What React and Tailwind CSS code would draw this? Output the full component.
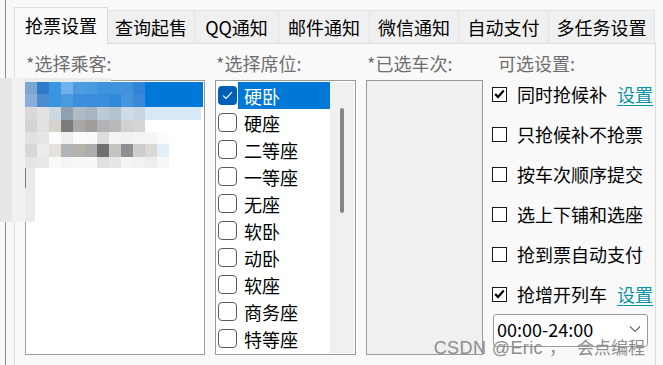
import React from 'react';

const TABS = [
  { label: '抢票设置', w: 'w-[94px]', active: true },
  { label: '查询起售', w: 'w-[87px]' },
  { label: 'QQ通知', w: 'w-[84px]' },
  { label: '邮件通知', w: 'w-[91px]' },
  { label: '微信通知', w: 'w-[89px]' },
  { label: '自动支付', w: 'w-[90px]' },
  { label: '多任务设置', w: 'w-[106px]' },
];

const SEATS = ['硬卧', '硬座', '二等座', '一等座', '无座', '软卧', '动卧', '软座', '商务座', '特等座'];

const OPTIONS = [
  { label: '同时抢候补', checked: true, link: true },
  { label: '只抢候补不抢票' },
  { label: '按车次顺序提交' },
  { label: '选上下铺和选座' },
  { label: '抢到票自动支付' },
  { label: '抢增开列车', checked: true, link: true },
];

// privacy mosaic over the passenger list
const MOSAIC = [
  { h: 'h-[12px]', cells: ['bg-[#7ba7d1]', 'bg-[#2f7bc7]', 'bg-[#3996e0]', 'bg-[#72b1e9]', 'bg-[#4b9ce1]', 'bg-[#4a9ae0]', 'bg-[#3e93de]', 'bg-[#3f92de]', 'bg-[#4291dc]', 'bg-[#2f86d8]'] },
  { h: 'h-[13px]', cells: ['bg-[#8aaed5]', 'bg-[#4a8dd0]', 'bg-[#3a95e0]', 'bg-[#4a9ae0]', 'bg-[#3b8fdc]', 'bg-[#3a8edc]', 'bg-[#3a8cdc]', 'bg-[#3089d9]', 'bg-[#4595dd]', 'bg-[#3a89d9]'] },
  { h: 'h-[13px]', cells: ['bg-[#d9d9d9]', 'bg-[#e2e2e2]', 'bg-[#ced8e1]', 'bg-[#8fa1b1]', 'bg-[#aebac6]', 'bg-[#a7b5c2]', 'bg-[#bccad6]', 'bg-[#b3c3d0]', 'bg-[#cfdce8]', 'bg-[#c9d6e2]'], tail: true },
  { h: 'h-[12px]', cells: ['bg-[#d3d3d3]', 'bg-[#e1e1e1]', 'bg-[#d9d3cd]', 'bg-[#7c7c7c]', 'bg-[#a8a8a8]', 'bg-[#a19d99]', 'bg-[#b1b3b7]', 'bg-[#b9b9b9]', 'bg-[#d1d1d1]', 'bg-[#d5d5d5]'] },
  { h: 'h-[12px]', cells: ['bg-[#e1e1e1]', 'bg-[#e5e5e5]', 'bg-[#fcfcfc]', 'bg-[#efefef]', 'bg-[#fbfbfb]', 'bg-[#fafafa]', 'bg-[#dddddd]', 'bg-[#f4f4f4]', 'bg-[#f1f1f1]', 'bg-[#f4f4f4]', 'bg-[#f4f6f8]', 'bg-[#fbfbfb]'] },
  { h: 'h-[13px]', cells: ['bg-[#d7d7d7]', 'bg-[#ececec]', 'bg-[#e5e1dd]', 'bg-[#b1b3b7]', 'bg-[#b5b1ad]', 'bg-[#adadad]', 'bg-[#717171]', 'bg-[#c5c5c1]', 'bg-[#8d8f91]', 'bg-[#cdcdcd]', 'bg-[#d9d9d5]', 'bg-[#e5eff7]'] },
  { h: 'h-[11px]', cells: ['bg-[#e5e5e5]', 'bg-[#e9e9e9]', 'bg-[#fafafa]', 'bg-[#f4f4f4]', 'bg-[#f8f8f8]', 'bg-[#f8f8f8]', 'bg-[#e1e1e1]', 'bg-[#e5e7e9]', 'bg-[#f4f4f4]', 'bg-[#f2f2f2]', 'bg-[#eeeeee]', 'bg-[#f6f8fa]'] },
];

function SeatCheck({ checked }) {
  if (checked) {
    return (
      <span className="w-[19px] h-[19px] rounded-[4px] bg-[#005fb8] flex items-center justify-center shrink-0">
        <svg width="11" height="9" viewBox="0 0 11 9" fill="none">
          <path d="M1 4.6 L4 7.4 L10 1.2" stroke="#fff" strokeWidth="1.1" />
        </svg>
      </span>
    );
  }
  return <span className="w-[19px] h-[19px] rounded-[4px] border-[1.5px] border-[#5c5c5c] bg-white shrink-0" />;
}

function OptCheck({ checked }) {
  return (
    <span className="w-[15px] h-[15px] border-[1.5px] border-[#1a1a1a] bg-white flex items-center justify-center shrink-0">
      {checked && (
        <svg width="11" height="10" viewBox="0 0 11 10" fill="none">
          <path d="M1.2 5 L4 8 L9.8 1.5" stroke="#000" strokeWidth="2.2" />
        </svg>
      )}
    </span>
  );
}

export default function App() {
  return (
    <div className="relative w-[663px] h-[365px] overflow-hidden bg-[#f9f9f9] flex font-['Noto_Sans_CJK_SC','Noto_Sans',sans-serif] text-[18px] leading-[24px] text-black">
      {/* window edge */}
      <div className="w-[5px] shrink-0" />
      <div className="w-px shrink-0 bg-[#8a8a8a]" />
      <div className="w-[8px] shrink-0 bg-[#f7f7f7]" />

      {/* tab control */}
      <div className="w-[642px] shrink-0 flex flex-col">
        <div className="h-[43px] flex items-end">
          {TABS.map((t) =>
            t.active ? (
              <div key={t.label} className={`${t.w} h-[37px] -mb-px relative z-10 bg-[#f9f9f9] border border-b-0 border-[#dcdcdc] flex items-center justify-center pb-[3px]`}>
                {t.label}
              </div>
            ) : (
              <div key={t.label} className={`${t.w} h-[33px] bg-[#f0f0f0] border-t border-r border-[#e3e3e3] flex items-center justify-center pb-px`}>
                {t.label}
              </div>
            )
          )}
        </div>

        <div className="flex-1 border border-b-0 border-[#dddddd] bg-[#f9f9f9] pl-[10px] pt-[7px] flex">
          {/* passengers */}
          <div className="w-[180px] shrink-0 flex flex-col">
            <div className="h-[24px] pl-px text-[#6e6e6e]">*选择乘客:</div>
            <div className="mt-[5px] h-[275px] border border-[#9a9a9a] bg-white pt-px px-px">
              <div className="h-[25px] bg-[#0078d7]" />
            </div>
          </div>

          {/* seats */}
          <div className="ml-[10px] w-[141px] shrink-0 flex flex-col">
            <div className="h-[24px] pl-px text-[#6e6e6e]">*选择席位:</div>
            <div className="mt-[5px] h-[275px] border border-[#9a9a9a] bg-white flex">
              <div className="flex-1 pt-px pl-[2px]">
                {SEATS.map((s, i) => (
                  <div key={s} className="h-[27px] flex items-center">
                    <SeatCheck checked={i === 0} />
                    <span className={`ml-px flex-1 h-full flex items-center pl-[6px] ${i === 0 ? 'bg-[#0078d7] text-white' : ''}`}>
                      {s}
                    </span>
                  </div>
                ))}
              </div>
              <div className="w-[24px] my-px mr-px bg-[#f0f0f0] pl-[10px] pt-[26px]">
                <div className="w-[4px] h-[105px] rounded-full bg-[#858585]" />
              </div>
            </div>
          </div>

          {/* selected trains */}
          <div className="ml-[10px] w-[117px] shrink-0 flex flex-col">
            <div className="h-[24px] pl-px text-[#6e6e6e]">*已选车次:</div>
            <div className="mt-[5px] h-[275px] border border-[#9a9a9a] bg-[#f0f0f0]" />
          </div>

          {/* options */}
          <div className="ml-[9px] flex-1 flex flex-col">
            <div className="h-[23px] pl-[6px] text-[#6e6e6e]">可选设置:</div>
            {OPTIONS.map((o) => (
              <div key={o.label} className="h-[40px] flex items-center">
                <OptCheck checked={o.checked} />
                <span className="ml-[10px]">{o.label}</span>
                {o.link && <span className="ml-[10px] text-[#0b93a6] underline underline-offset-[3px]">设置</span>}
              </div>
            ))}
            <div className="ml-px w-[155px] h-[33px] border border-[#9a9a9a] rounded-[3px] bg-white flex items-center justify-between pl-[3px] pr-[6px] pb-[3px]">
              <span className="leading-[19px]">00:00-24:00</span>
              <svg width="12" height="8" viewBox="0 0 12 8" fill="none">
                <path d="M1 1.5 L6 6.5 L11 1.5" stroke="#6a6a6a" strokeWidth="1.2" />
              </svg>
            </div>
          </div>
        </div>
      </div>

      {/* mosaic overlay */}
      <div className="absolute left-0 top-[78px] w-[12px] h-[144px] bg-[#e6e6e6]" />
      <div className="absolute left-[12px] top-[78px] w-[13px] h-[144px] bg-[#f1f1f1]" />
      <div className="absolute left-[25px] top-[168px] w-[10px] h-[54px] bg-[#ebebeb]" />
      <div className="absolute left-[25px] top-[165px] w-px h-[23px] bg-[#7a7a7a]" />
      <div className="absolute left-[25px] top-[78px] w-[86px] h-[4px] bg-[#e9ecef]" />
      <div className="absolute left-[25px] top-[82px] flex flex-col">
        {MOSAIC.map((row, r) => (
          <div key={r} className={`${row.h} flex`}>
            {row.cells.map((c, k) => (
              <div key={k} className={`w-[12px] h-full ${c}`} />
            ))}
            {row.tail && <div className="w-[56px] h-full bg-[#d9e8f6]" />}
          </div>
        ))}
      </div>

      {/* watermark */}
      <div className="absolute right-[18px] bottom-[7px] flex items-end leading-[19px] text-[#8e8e8e] font-['Liberation_Sans','Noto_Sans_CJK_SC',sans-serif]">
        <span className="text-[18px] tracking-[0.4px]">CSDN @Eric</span>
        <span className="ml-[6px] text-[17px]">，</span>
        <span className="ml-[11px] text-[17px]">会点编程</span>
      </div>
    </div>
  );
}
